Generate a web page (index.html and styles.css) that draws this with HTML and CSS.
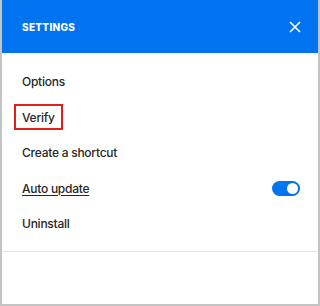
FILE: index.html
```html
<!DOCTYPE html>
<html>
<head>
<meta charset="utf-8">
<link rel="stylesheet" href="styles.css">
</head>
<body>
<div class="panel">
  <header class="header">
    <span class="title">SETTINGS</span>
    <svg class="close" width="12" height="12" viewBox="0 0 12 12"><path d="M1 1L11 11M11 1L1 11" stroke="#fff" stroke-width="1.6" fill="none"/></svg>
  </header>
  <ul class="menu">
    <li class="item"><span>Options</span></li>
    <li class="item"><span class="highlight">Verify</span></li>
    <li class="item"><span>Create a shortcut</span></li>
    <li class="item row"><span class="underline">Auto update</span><span class="toggle"><span class="knob"></span></span></li>
    <li class="item"><span>Uninstall</span></li>
  </ul>
  <div class="footer"></div>
</div>
</body>
</html>
```

FILE: styles.css
```css
html, body { margin: 0; padding: 0; background: #fff; }
body { font-family: "Inter", "Liberation Sans", sans-serif; }
.panel {
  width: 320px;
  height: 306px;
  box-sizing: border-box;
  border-left: 2px solid #c4c4c4;
  border-right: 2px solid #c4c4c4;
  border-bottom: 2px solid #c4c4c4;
  display: flex;
  flex-direction: column;
}
.header {
  height: 53px;
  flex: none;
  background: #0074f0;
  display: flex;
  align-items: center;
  justify-content: space-between;
  padding: 0 17px 0 20px;
}
.title {
  color: #fff;
  font-size: 10px;
  font-weight: 800;
  letter-spacing: 0.3px;
}
.close { display: block; }
.menu {
  list-style: none;
  margin: 0;
  padding: 11px 0 9px 20px;
  border-bottom: 1px solid #e6e6e6;
}
.item {
  height: 35.5px;
  display: flex;
  align-items: center;
  font-size: 12px;
  font-weight: 500;
  color: #262626;
  letter-spacing: -0.25px;
}
.row { justify-content: space-between; padding-right: 18px; }
.highlight {
  border: 2px solid #e31c1c;
  padding: 4px 6px 3px 6px;
  margin-left: -8px;
}
.underline { text-decoration: underline; text-underline-offset: 2px; }
.toggle {
  width: 28px;
  height: 15px;
  border-radius: 8px;
  background: #0074f0;
  display: flex;
  align-items: center;
  justify-content: flex-end;
  padding: 0 2px;
  box-sizing: border-box;
}
.knob {
  width: 11px;
  height: 11px;
  border-radius: 50%;
  background: #fff;
}
.footer { flex: 1; }
```
